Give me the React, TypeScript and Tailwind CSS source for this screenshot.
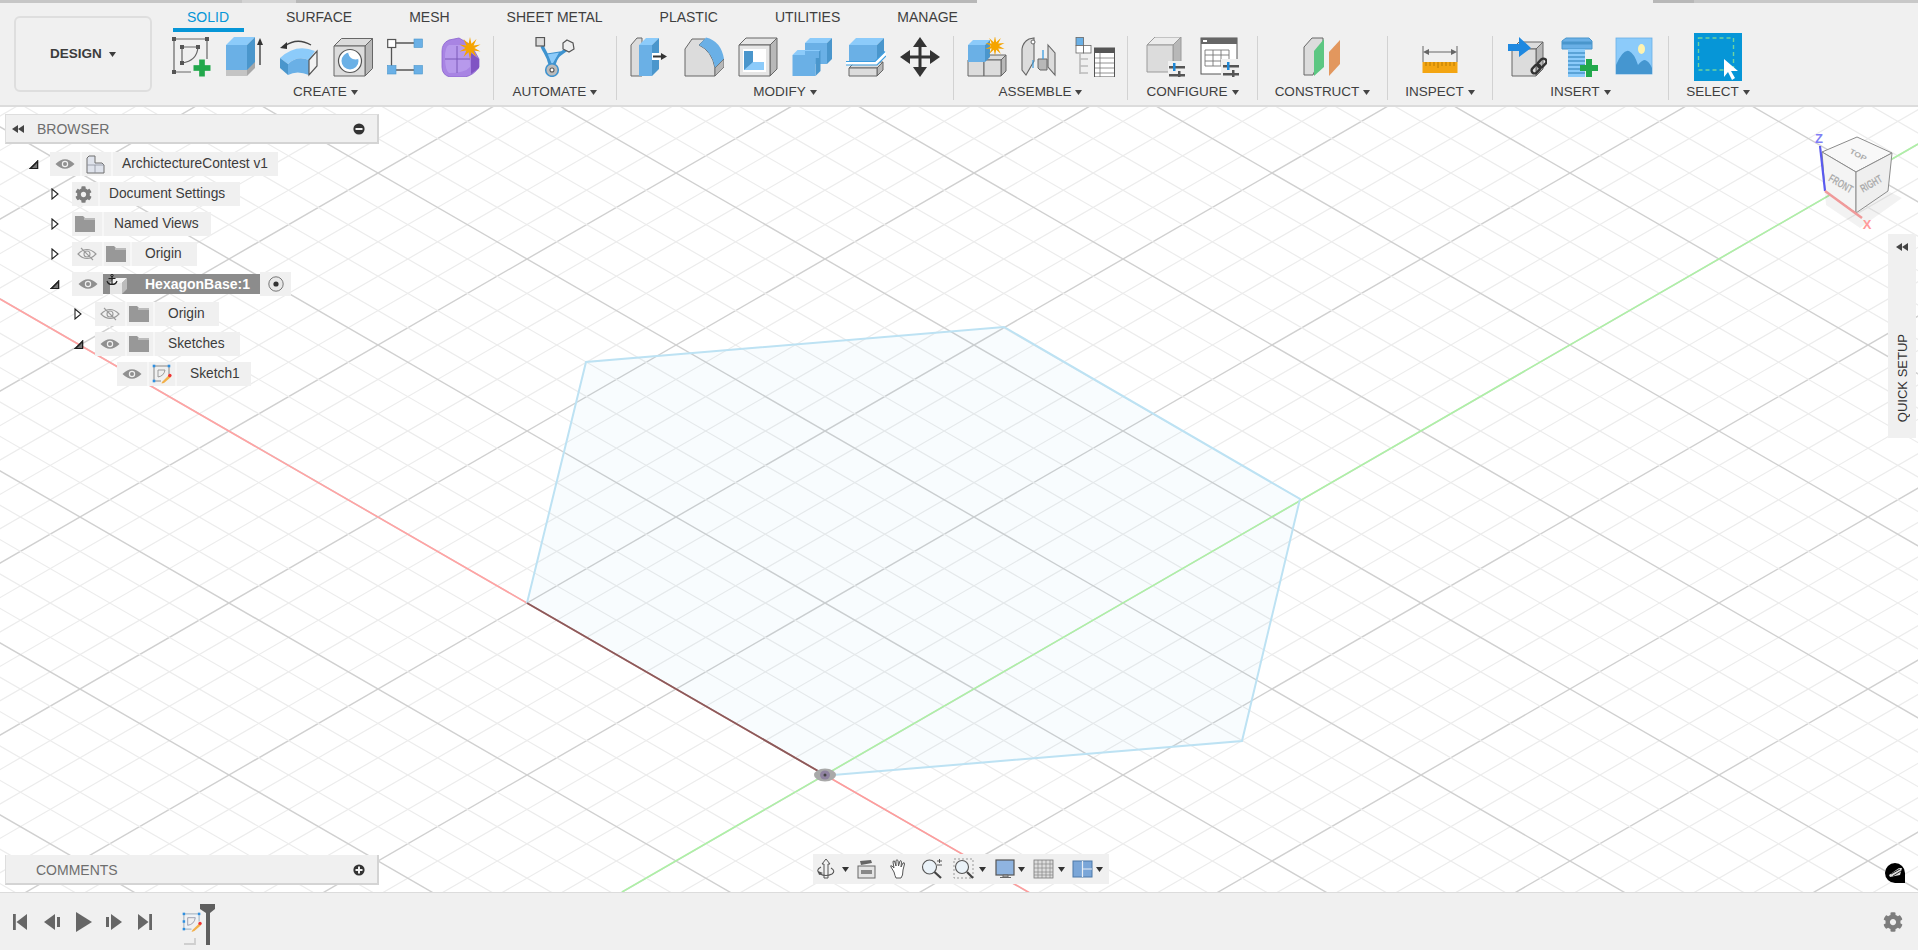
import type { ReactNode } from "react";
import { FaCog } from "react-icons/fa";

const BLUE = "#6ab0e6";
const BLUE_TOP = "#8ccbfa";
const BLUE_SIDE = "#4a96cc";
const GRAY = "#dcdcdc";
const GRAY_SIDE = "#b8b8b8";
const EDGE = "#666666";

function starPoints(cx: number, cy: number, R: number, r: number, n: number) {
  const pts: string[] = [];
  for (let i = 0; i < n * 2; i++) {
    const a = (Math.PI * i) / n;
    const d = i % 2 === 0 ? R : r;
    pts.push(`${(cx + d * Math.sin(a)).toFixed(1)},${(cy - d * Math.cos(a)).toFixed(1)}`);
  }
  return pts.join(" ");
}

function Box({
  x,
  y,
  w,
  h,
  d,
  top = BLUE_TOP,
  front = BLUE,
  side = BLUE_SIDE,
  stroke,
}: {
  x: number;
  y: number;
  w: number;
  h: number;
  d: number;
  top?: string;
  front?: string;
  side?: string;
  stroke?: string;
}) {
  return (
    <g stroke={stroke} strokeWidth={stroke ? 1 : 0} strokeLinejoin="round">
      <polygon fill={top} points={`${x},${y} ${x + d},${y - d} ${x + w + d},${y - d} ${x + w},${y}`} />
      <polygon fill={side} points={`${x + w},${y} ${x + w + d},${y - d} ${x + w + d},${y + h - d} ${x + w},${y + h}`} />
      <rect fill={front} x={x} y={y} width={w} height={h} />
    </g>
  );
}

function Plus({ x, y, s = 17 }: { x: number; y: number; s?: number }) {
  const t = s / 3;
  return (
    <g fill="#22a84c">
      <rect x={x - s / 2} y={y - t / 2} width={s} height={t} />
      <rect x={x - t / 2} y={y - s / 2} width={t} height={s} />
    </g>
  );
}

function Sliders({ x, y }: { x: number; y: number }) {
  return (
    <g>
      <rect x={x} y={y} width="16" height="2.5" fill="#555" />
      <rect x={x + 4} y={y - 3} width="2.5" height="8" fill="#1e88d8" />
      <rect x={x} y={y + 8} width="16" height="2.5" fill="#555" />
      <rect x={x + 9} y={y + 5} width="2.5" height="8" fill="#555" />
    </g>
  );
}

function Ico({ children, w = 40, h = 40 }: { children: ReactNode; w?: number; h?: number }) {
  return (
    <svg width={w} height={h} viewBox={`0 0 ${w} ${h}`} className="block shrink-0">
      {children}
    </svg>
  );
}

const SketchIcon = () => (
  <Ico>
    <g stroke={EDGE} strokeWidth="1.2" fill="none">
      <path d="M3 2 H36 V22 M3 2 V35 H20" />
      <path d="M11 10 H27 M11 10 V26 M27 10 Q26 24 11 26" />
    </g>
    {[[3, 2], [36, 2], [3, 35], [11, 10], [27, 10], [11, 26]].map(([x, y]) => (
      <rect key={`${x}-${y}`} x={x - 2} y={y - 2} width="4" height="4" fill="#555" />
    ))}
    <Plus x={31} y={31} />
  </Ico>
);

const ExtrudeIcon = () => (
  <Ico>
    <Box x={1} y={32} w={21} h={7} d={8} top={GRAY} front="#c4c4c4" side="#a8a8a8" />
    <Box x={1} y={8} w={21} h={25} d={8} />
    <path d="M35 28 V6" stroke="#333" strokeWidth="1.3" />
    <polygon points="35,1 38,8 32,8" fill="#333" />
  </Ico>
);

const RevolveIcon = () => (
  <Ico>
    <path d="M32 8 Q18 0 6 9" stroke="#444" strokeWidth="1.3" fill="none" />
    <polygon points="1,11 8,5 8,12" fill="#333" />
    <path d="M1 21 Q17 6 36 14 L30 23 Q18 18 9 27 Z" fill={BLUE_TOP} />
    <path d="M1 21 L9 27 V38 L1 31 Z" fill={BLUE_SIDE} />
    <path d="M9 27 Q18 18 30 23 V38 Q18 33 9 38 Z" fill={BLUE} />
    <polygon points="30,23 38,14 38,29 30,38" fill="#f2f2f2" stroke="#555" strokeWidth="1.2" />
  </Ico>
);

const HoleIcon = () => (
  <Ico>
    <Box x={1} y={9} w={31} h={30} d={7.5} top={GRAY} front={GRAY} side={GRAY_SIDE} stroke={EDGE} />
    <circle cx="17" cy="24" r="11.5" fill="#fff" stroke="#555" strokeWidth="1.2" />
    <circle cx="17" cy="24" r="8.5" fill={BLUE} />
    <path d="M15 15.5 Q17 24 25.5 22 Q26 16 19 15 Z" fill="#fff" />
  </Ico>
);

const BoxTool = () => (
  <Ico>
    <path d="M9 6 H27 M4.5 11 V29 M9 33 H27" stroke="#555" strokeWidth="1.3" />
    <rect x="0.7" y="2.5" width="8" height="8" fill="#fff" stroke="#555" strokeWidth="1.2" />
    <rect x="27" y="2" width="8.5" height="8.5" fill={BLUE} stroke={BLUE_SIDE} strokeWidth="0.6" />
    <rect x="0.5" y="28.5" width="8.5" height="8.5" fill={BLUE} stroke={BLUE_SIDE} strokeWidth="0.6" />
    <rect x="27" y="28.5" width="8.5" height="8.5" fill={BLUE} stroke={BLUE_SIDE} strokeWidth="0.6" />
  </Ico>
);

const FormIcon = () => (
  <Ico>
    <path d="M1 14 Q1 6 8 3 L18 1 L30 8 L38 22 L38 30 Q33 38 24 40 H9 Q1 38 1 30 Z" fill="#a884e3" stroke="#8a63cf" strokeWidth="0.8" />
    <path d="M30 16 L38 22 V31 L30 37 Z" fill="#8054c4" />
    <path d="M8 8 L24 8 Q29 10 29 30 Q24 36 8 36 Q4 33 4 20 Q4 10 8 8Z" fill="#b799ec" />
    <path d="M4 22 H29 M16 9 V36" stroke="#7b58b8" strokeWidth="1" fill="none" />
    <polygon points={starPoints(29, 11, 11, 4.5, 10)} fill="#f5a400" />
  </Ico>
);

const AutomateIcon = () => (
  <Ico>
    <path d="M7 9 C10 16 13 18 15 27 M32 12 C26 17 22 17 19 27" stroke="#3f93cf" strokeWidth="3.4" fill="none" />
    <polygon points="12,17 25,15 17,29" fill={BLUE_TOP} stroke="#3f93cf" strokeWidth="1.2" />
    <rect x="1" y="0.5" width="8.5" height="8.5" fill={GRAY} stroke="#555" strokeWidth="1.2" />
    <polygon points="32,3 38,6 39,12 34,15 28,12 28,6" fill="#eee" stroke="#555" strokeWidth="1.2" />
    <circle cx="17" cy="33" r="6.3" fill="#bbb" stroke="#3f93cf" strokeWidth="1.6" />
    <circle cx="17" cy="33" r="2" fill="#fff" stroke="#555" strokeWidth="1.1" />
  </Ico>
);

const PressPullIcon = () => (
  <Ico>
    <path d="M1 39 V8 L7 1 H12 V39 Z" fill={GRAY} stroke={EDGE} strokeWidth="1" />
    <Box x={9} y={8} w={13} h={31} d={7} />
    <rect x="22" y="16" width="8" height="7" fill="#fff" />
    <path d="M23 19.5 H32" stroke="#333" strokeWidth="2" />
    <polygon points="37,19.5 31,16 31,23" fill="#333" />
  </Ico>
);

const FilletIcon = () => (
  <Ico>
    <path d="M1 39 V12 L8 2 H21 L15 8 Q28 14 31 31 V39 Z" fill={GRAY} stroke={EDGE} strokeWidth="1" />
    <path d="M15 8 L22 0.5 Q37 4 40 22 L31 31 Q28 14 15 8 Z" fill={BLUE} />
    <path d="M31 39 L40 30 V22 L31 31 Z" fill={GRAY_SIDE} stroke={EDGE} strokeWidth="0.8" />
  </Ico>
);

const ShellIcon = () => (
  <Ico>
    <Box x={1} y={8} w={31} h={31} d={7} top="#e6e6e6" front="#e6e6e6" side={GRAY_SIDE} stroke={EDGE} />
    <rect x="5" y="12" width="23" height="23" fill="#fff" />
    <rect x="6" y="14" width="9" height="19" fill={BLUE_SIDE} />
    <polygon points="6,33 15,25 26,25 26,33" fill={BLUE_TOP} />
  </Ico>
);

const CombineIcon = () => (
  <Ico>
    <Box x={13} y={6} w={22} h={21} d={5} />
    <Box x={0.5} y={18} w={23} h={21} d={5} />
    <rect x="13" y="14" width="14" height="7" fill={BLUE} />
  </Ico>
);

const OffsetIcon = () => (
  <Ico>
    <Box x={3} y={8} w={28} h={18} d={7} />
    <Box x={3} y={31} w={28} h={8} d={6} top={GRAY} front={GRAY} side={GRAY_SIDE} stroke={EDGE} />
    <path d="M0 26 H30 L40 16" stroke="#fff" strokeWidth="3.5" fill="none" />
    <path d="M0 24.5 H29 L39 14.5 M0 28 H31 L40 19" stroke="#3b9de0" strokeWidth="1.1" fill="none" />
  </Ico>
);

const MoveIcon = () => (
  <Ico>
    <path d="M20 6 V34 M6 20 H34" stroke="#333" strokeWidth="3" />
    <polygon points="20,0 27,10 13,10" fill="#333" />
    <polygon points="20,40 27,30 13,30" fill="#333" />
    <polygon points="0,20 10,13 10,27" fill="#333" />
    <polygon points="40,20 30,13 30,27" fill="#333" />
  </Ico>
);

const NewComponentIcon = () => (
  <Ico>
    <Box x={1} y={23} w={16} h={16} d={0} front={GRAY} stroke={EDGE} />
    <Box x={17} y={23} w={17} h={16} d={5} top={GRAY} front={GRAY} side={GRAY_SIDE} stroke={EDGE} />
    <Box x={1} y={8} w={17} h={17} d={5} />
    <polygon points={starPoints(28, 9, 10, 4, 10)} fill="#f5a400" />
  </Ico>
);

const JointIcon = () => (
  <Ico>
    <path d="M1 33 V12 Q2 5 8 2 L13 1 V24 L5 38 Z" fill={GRAY} stroke={EDGE} strokeWidth="1.1" />
    <circle cx="12" cy="5" r="2" fill="#fff" stroke={EDGE} />
    <path d="M12 23 V31" stroke="#3b9de0" strokeWidth="1.2" />
    <path d="M17 22 H26 V33 H19 L17 31 Z" fill={GRAY_SIDE} stroke={EDGE} />
    <path d="M27 8 L34 16 V38 L27 30 Z" fill={GRAY} stroke={EDGE} strokeWidth="1.1" />
    <path d="M22 13 V22" stroke="#3b9de0" strokeWidth="1.3" />
  </Ico>
);

const BomIcon = () => (
  <Ico>
    <rect x="1" y="0.5" width="7.5" height="8" fill={BLUE} stroke={EDGE} strokeWidth="0.8" />
    <rect x="1" y="8.5" width="7.5" height="7.5" fill="#fff" stroke={EDGE} strokeWidth="0.8" />
    <rect x="8.5" y="8.5" width="7.5" height="7.5" fill="#fff" stroke={EDGE} strokeWidth="0.8" />
    <path d="M5 16 V37 M5 22 H13 M5 29 H13 M5 36 H13" stroke="#bbb" strokeWidth="1.6" />
    <rect x="19.5" y="11" width="20" height="29" fill="#fff" stroke="#555" strokeWidth="1" />
    <rect x="19.5" y="11" width="20" height="5" fill="#555" />
    <path d="M20 21 H39 M20 26 H39 M20 31 H39 M20 36 H39 M25 16 V40" stroke="#777" strokeWidth="0.8" />
  </Ico>
);

const ConfigBoxIcon = () => (
  <Ico>
    <Box x={1} y={8} w={26} h={27} d={8} top="#ececec" front={GRAY} side={GRAY_SIDE} stroke="#9a9a9a" />
    <rect x="22" y="24" width="18" height="16" fill="#f0f0f0" />
    <Sliders x={23} y={29} />
  </Ico>
);

const ConfigTableIcon = () => (
  <Ico>
    <rect x="1" y="1" width="36" height="36" fill="#fff" stroke="#555" strokeWidth="1" />
    <rect x="1" y="1" width="36" height="6" fill="#666" />
    <rect x="3" y="3" width="4" height="2" fill="#fff" />
    <path d="M5 13 H29 V29 H5 Z M5 18 H29 M5 24 H29 M13 13 V29 M21 13 V29" stroke="#777" strokeWidth="0.9" fill="none" />
    <rect x="21" y="22" width="19" height="18" fill="#f0f0f0" />
    <Sliders x={23} y={28} />
  </Ico>
);

const ConstructIcon = () => (
  <Ico>
    <path d="M1 38 V10 L9 1 H20 V14 L10 38 Z" fill={GRAY} stroke={EDGE} strokeWidth="1" />
    <polygon points="11,14 21,2 21,30 11,39" fill="#5cc782" />
    <polygon points="26,15 37,3 37,27 26,39" fill="#e2975e" />
  </Ico>
);

const InspectIcon = () => (
  <Ico>
    <path d="M3 9 V25 M37 9 V25" stroke="#666" strokeWidth="1" />
    <path d="M6 15 H34" stroke="#666" strokeWidth="1" />
    <polygon points="3,15 9,12 9,18" fill="#666" />
    <polygon points="37,15 31,12 31,18" fill="#666" />
    <rect x="2.5" y="25" width="35" height="11" fill="#f3a512" />
    <path d="M6 25 V29 M10 25 V29 M14 25 V29 M18 25 V31 M22 25 V29 M26 25 V29 M30 25 V29 M34 25 V29" stroke="#a66f00" strokeWidth="0.8" />
  </Ico>
);

const DeriveIcon = () => (
  <Ico>
    <Box x={5} y={12} w={24} h={27} d={7} top={GRAY} front={GRAY} side={GRAY_SIDE} stroke={EDGE} />
    <polygon points="1,7 12,7 12,0 24,11 12,20 12,14 1,14" fill="#1e88e0" />
    <g fill="none" stroke="#333" strokeWidth="2.4">
      <rect x="24" y="29" width="10" height="6" rx="3" transform="rotate(-45 29 32)" />
      <rect x="30" y="23" width="10" height="6" rx="3" transform="rotate(-45 35 26)" />
    </g>
  </Ico>
);

const BoltIcon = () => (
  <Ico>
    <polygon points="1,4 5,1 28,1 31,4 31,12 1,12" fill={BLUE} stroke="#4a96cc" />
    <path d="M1 6 H31" stroke={BLUE_SIDE} strokeWidth="3" />
    <rect x="7" y="12" width="17" height="28" fill={BLUE_TOP} />
    <path d="M7 16 H24 M7 20 H24 M7 24 H24 M7 28 H24 M7 32 H24 M7 36 H24" stroke={BLUE_SIDE} strokeWidth="1.4" />
    <Plus x={28} y={31} s={18} />
  </Ico>
);

const PictureIcon = () => (
  <Ico>
    <rect x="1" y="1" width="36" height="36" fill={BLUE_TOP} stroke={BLUE} strokeWidth="0.8" />
    <path d="M1 28 Q8 12 14 14 Q19 16 23 28 Q27 23 30 23 Q34 24 37 31 V37 H1 Z" fill="#4596d0" />
    <ellipse cx="26.5" cy="12" rx="3.5" ry="5" fill="#fff3b0" />
  </Ico>
);

const SelectIcon = () => (
  <Ico w={48} h={48}>
    <rect width="48" height="48" fill="#0696d7" />
    <rect x="4.5" y="5" width="35" height="32" fill="none" stroke="#6fd3a0" strokeWidth="1.4" strokeDasharray="4 3" />
    <polygon points="30,26 30,44 34,39 38,47 41,45 37,38 44,38" fill="#fff" />
  </Ico>
);

function Caret({ className = "fill-[#444]" }: { className?: string }) {
  return (
    <svg width="7" height="5" viewBox="0 0 7 5" className={`block shrink-0 ${className}`}>
      <polygon points="0,0 7,0 3.5,5" />
    </svg>
  );
}

const groups: { label: string; width: string; icons: ReactNode[] }[] = [
  { label: "CREATE", width: "w-[336px]", icons: [<SketchIcon />, <ExtrudeIcon />, <RevolveIcon />, <HoleIcon />, <BoxTool />, <FormIcon />] },
  { label: "AUTOMATE", width: "w-[123px]", icons: [<AutomateIcon />] },
  { label: "MODIFY", width: "w-[337px]", icons: [<PressPullIcon />, <FilletIcon />, <ShellIcon />, <CombineIcon />, <OffsetIcon />, <MoveIcon />] },
  { label: "ASSEMBLE", width: "w-[174px]", icons: [<NewComponentIcon />, <JointIcon />, <BomIcon />] },
  { label: "CONFIGURE", width: "w-[130px]", icons: [<ConfigBoxIcon />, <ConfigTableIcon />] },
  { label: "CONSTRUCT", width: "w-[130px]", icons: [<ConstructIcon />] },
  { label: "INSPECT", width: "w-[105px]", icons: [<InspectIcon />] },
  { label: "INSERT", width: "w-[176px]", icons: [<DeriveIcon />, <BoltIcon />, <PictureIcon />] },
];

const tabs = ["SOLID", "SURFACE", "MESH", "SHEET METAL", "PLASTIC", "UTILITIES", "MANAGE"];

function Toolbar() {
  return (
    <header className="h-[107px] shrink-0 bg-[#f0f0f0] border-b-2 border-[#dcdcdc] flex flex-col">
      <div className="h-[3px] flex shrink-0">
        <div className="w-[242px] bg-[#c6c6c6]" />
        <div className="w-[54px] bg-[#d4d4d4]" />
        <div className="w-[681px] bg-[#b8b8b8]" />
        <div className="w-[676px]" />
        <div className="w-[41px] bg-[#b8b8b8]" />
        <div className="flex-1 bg-[#c8c8c8]" />
      </div>
      <div className="flex flex-1 min-h-0">
        <div className="w-[158px] shrink-0 pl-[14px] pt-[13px]">
          <div className="w-[138px] h-[76px] border-2 border-[#dedede] rounded-[6px] flex items-center justify-center gap-[7px] text-[13.5px] font-bold text-[#3c3c3c]">
            DESIGN
            <Caret className="fill-[#3c3c3c]" />
          </div>
        </div>
        <div className="flex-1 flex flex-col">
          <nav className="h-[30px] shrink-0 pl-[29px] pt-[6px] flex gap-[57px] text-[14px] leading-4 text-[#3f3f3f]">
            {tabs.map((t, i) => (
              <div key={t} className={`relative ${i === 0 ? "text-[#0696d7]" : ""}`}>
                {t}
                {i === 0 && <div className="absolute left-[-14px] right-[-15px] top-[19px] h-[4px] bg-[#0696d7]" />}
              </div>
            ))}
          </nav>
          <div className="flex mt-[3px]">
            {groups.map((g) => (
              <div key={g.label} className={`${g.width} h-[64px] box-border border-r border-[#d2d2d2] flex flex-col items-center`}>
                <div className="h-[48px] pt-px flex">
                  {g.icons.map((icon, i) => (
                    <div key={i} className="w-[54px] flex justify-center">
                      {icon}
                    </div>
                  ))}
                </div>
                <div className="flex items-center gap-[4px] text-[13.5px] leading-4 text-[#3f3f3f]">
                  {g.label}
                  <Caret />
                </div>
              </div>
            ))}
            <div className="w-[98px] h-[64px] flex flex-col items-center">
              <div className="h-[48px] mt-[-3px] mb-[3px]">
                <SelectIcon />
              </div>
              <div className="flex items-center gap-[4px] text-[13.5px] leading-4 text-[#3f3f3f]">
                SELECT
                <Caret />
              </div>
            </div>
          </div>
        </div>
      </div>
    </header>
  );
}

// model grid drawn around the world origin
const O = { x: 825, y: 775 };
const U = { x: 149 / 5, y: 86 / 5 };

function gridLines(sign: number) {
  const lines = [];
  for (let k = -90; k <= 90; k++) {
    const px = O.x + k * U.x;
    const py = O.y - sign * k * U.y;
    lines.push(
      <line
        key={k}
        x1={px - 2980}
        y1={py - sign * 1720}
        x2={px + 2980}
        y2={py + sign * 1720}
        stroke={k % 5 === 0 ? "#d0d0d0" : "#ececec"}
        strokeWidth={k % 5 === 0 ? 1.4 : 1.2}
      />
    );
  }
  return lines;
}

function ViewCube() {
  return (
    <g>
      <polygon points="1825,191 1856,213 1888,191 1902,198 1860,228 1826,205" fill="#000" opacity="0.05" />
      <polygon points="1822,152 1857,137 1892,153 1856,172" fill="#f8f8f8" stroke="#8c8c8c" strokeWidth="1" />
      <polygon points="1822,152 1856,172 1856,213 1825,191" fill="#f4f4f4" stroke="#8c8c8c" strokeWidth="1" />
      <polygon points="1856,172 1892,153 1888,191 1856,213" fill="#efefef" stroke="#8c8c8c" strokeWidth="1" />
      <g fontFamily="'Liberation Sans', sans-serif" fontWeight="700" fill="#adadad" textAnchor="middle">
        <text fontSize="9" transform="translate(1857 157) rotate(28) scale(1 0.8)">TOP</text>
        <text fontSize="7.5" transform="translate(1839 187) rotate(30) scale(1 1.5)">FRONT</text>
        <text fontSize="7.5" transform="translate(1873 187) rotate(-30) scale(1 1.5)">RIGHT</text>
      </g>
      <line x1="1825" y1="191" x2="1820" y2="146" stroke="#5a5af0" strokeWidth="2.2" />
      <line x1="1825" y1="191" x2="1862" y2="218" stroke="#f09a9a" strokeWidth="2.5" />
      <text x="1819" y="143" textAnchor="middle" fill="#7f7ff5" fontSize="13" fontWeight="700" fontFamily="'Liberation Sans', sans-serif">Z</text>
      <text x="1867" y="229" textAnchor="middle" fill="#ff9a9a" fontSize="13" fontWeight="700" fontFamily="'Liberation Sans', sans-serif">X</text>
    </g>
  );
}

function Canvas() {
  return (
    <svg viewBox="0 107 1918 785" className="absolute inset-0 w-full h-full">
      <g>{gridLines(-1)}</g>
      <g>{gridLines(1)}</g>
      <polygon points="527,603 586,362 1004,327 1300,499 1242,741 825,775" fill="#58b4e6" fillOpacity="0.04" />
      <line x1="825" y1="775" x2="0" y2="299" stroke="#ffa3a3" strokeWidth="1.6" />
      <line x1="825" y1="775" x2="1030" y2="893" stroke="#ff9c9c" strokeWidth="1.6" />
      <line x1="622" y1="892" x2="1918" y2="144" stroke="#aef0a6" strokeWidth="1.6" />
      <polyline points="527,603 586,362 1004,327 1300,499 1242,741 833,775" fill="none" stroke="#bde2f3" strokeWidth="2" />
      <line x1="527" y1="603" x2="825" y2="775" stroke="#8a5a5a" strokeWidth="1.8" />
      <ellipse cx="825" cy="775" rx="11" ry="6.5" fill="#a9a9a9" />
      <ellipse cx="825" cy="775" rx="5" ry="4.5" fill="#8f82a0" />
      <circle cx="825" cy="775" r="1.5" fill="#444" />
      <ViewCube />
    </svg>
  );
}

function Eye({ off }: { off?: boolean }) {
  return (
    <svg width="20" height="14" viewBox="0 0 20 14" className="block shrink-0">
      {off ? (
        <g>
          <path d="M1 7 Q10 -2 19 7 Q10 16 1 7 Z" fill="none" stroke="#9a9a9a" strokeWidth="1.1" />
          <circle cx="10" cy="7" r="3" fill="none" stroke="#9a9a9a" strokeWidth="1.1" />
          <path d="M4 1 L16 13" stroke="#9a9a9a" strokeWidth="1.1" />
        </g>
      ) : (
        <g>
          <path d="M0.5 7 Q10 -2.5 19.5 7 Q10 16.5 0.5 7 Z" fill="#909090" />
          <circle cx="10" cy="7" r="3.2" fill="#f0f0f0" />
          <circle cx="10" cy="7" r="2" fill="#909090" />
        </g>
      )}
    </svg>
  );
}

function Folder() {
  return (
    <svg width="20" height="16" viewBox="0 0 20 16" className="block shrink-0">
      <path d="M0 0 H8 L10 2 H20 V16 H0 Z" fill="#989898" />
      <path d="M9 3 H20" stroke="#f0f0f0" strokeWidth="0.8" />
    </svg>
  );
}

function Twist({ open }: { open: boolean }) {
  return open ? (
    <svg width="10" height="9" viewBox="0 0 10 9" className="block">
      <polygon points="0,9 9,0 9,9" fill="#222" stroke="#222" strokeWidth="0.6" />
      <polygon points="3,8 8,3 8,8" fill="#777" />
    </svg>
  ) : (
    <svg width="8" height="12" viewBox="0 0 8 12" className="block">
      <polygon points="1,1 7,6 1,11" fill="#fff" stroke="#222" strokeWidth="1.1" />
    </svg>
  );
}

function Seg({ children, className = "" }: { children: ReactNode; className?: string }) {
  return <div className={`h-full bg-[#f0f0f0] flex items-center ${className}`}>{children}</div>;
}

function ComponentGlyph() {
  return (
    <svg width="19" height="19" viewBox="0 0 19 19" className="block">
      <path d="M1 18 V3 L3 1 H9 V8 H16 L18 10 V18 Z" fill="#dfe3ec" stroke="#6f6f6f" strokeWidth="1" />
      <path d="M1 10 H18 M9 10 V18" stroke="#8d93a0" strokeWidth="0.8" fill="none" />
    </svg>
  );
}

function SmallSketch() {
  return (
    <svg width="20" height="20" viewBox="0 0 20 20" className="block">
      <path d="M2 2 H17 V10 M2 2 V17 H9" fill="none" stroke="#888" strokeWidth="1" />
      <path d="M6 6 H13 M6 6 V13 M13 6 Q12 12 6 13" fill="none" stroke="#888" strokeWidth="0.8" />
      {[[2, 2], [17, 2], [2, 17]].map(([x, y]) => (
        <rect key={`${x}${y}`} x={x - 1.3} y={y - 1.3} width="2.6" height="2.6" fill="#2e8fe0" />
      ))}
      <path d="M10 18 L17 11 L19 13 L12 19 L9.5 19.5 Z" fill="#f2b04a" />
      <circle cx="17.8" cy="11.5" r="1.8" fill="#e33" />
    </svg>
  );
}

type Node = {
  id: string;
  indent: string;
  twist?: "open" | "closed";
  eye?: "on" | "off";
  glyph: ReactNode;
  glyphClass: string;
  label: string;
  labelClass: string;
};

const nodes: Node[] = [
  { id: "root", indent: "ml-[23px]", twist: "open", eye: "on", glyph: <ComponentGlyph />, glyphClass: "w-[29px] pl-[4px]", label: "ArchictectureContest v1", labelClass: "pl-[9px] pr-[10px]" },
  { id: "settings", indent: "ml-[45px]", twist: "closed", glyph: <FaCog className="text-[#7d7d7d] text-[17px]" />, glyphClass: "w-[26px] pl-[3px]", label: "Document Settings", labelClass: "pl-[9px] pr-[15px]" },
  { id: "views", indent: "ml-[45px]", twist: "closed", glyph: <Folder />, glyphClass: "w-[30px] pl-[3px]", label: "Named Views", labelClass: "pl-[10px] pr-[12px]" },
  { id: "origin", indent: "ml-[45px]", twist: "closed", eye: "off", glyph: <Folder />, glyphClass: "w-[26px] pl-[2px]", label: "Origin", labelClass: "pl-[13px] pr-[15px]" },
  { id: "origin2", indent: "ml-[68px]", twist: "closed", eye: "off", glyph: <Folder />, glyphClass: "w-[26px] pl-[2px]", label: "Origin", labelClass: "pl-[13px] pr-[14px]" },
  { id: "sketches", indent: "ml-[68px]", twist: "open", eye: "on", glyph: <Folder />, glyphClass: "w-[26px] pl-[2px]", label: "Sketches", labelClass: "pl-[13px] pr-[15px]" },
  { id: "sketch1", indent: "ml-[90px]", eye: "on", glyph: <SmallSketch />, glyphClass: "w-[26px] pl-[3px]", label: "Sketch1", labelClass: "pl-[13px] pr-[11px]" },
];

function TreeRow({ node }: { node: Node }) {
  return (
    <div className={`flex items-center h-[24px] mt-[6px] ${node.indent}`}>
      <div className="pl-px w-[22px] shrink-0">{node.twist && <Twist open={node.twist === "open"} />}</div>
      <div className="flex h-full gap-[2px] bg-[#f7f7f7]">
        {node.eye && (
          <Seg className="w-[30px] justify-center">
            <Eye off={node.eye === "off"} />
          </Seg>
        )}
        <Seg className={node.glyphClass}>{node.glyph}</Seg>
        <Seg className={`pt-px text-[13.75px] text-[#3c3c3c] whitespace-nowrap ${node.labelClass}`}>{node.label}</Seg>
      </div>
    </div>
  );
}

function HexagonRow() {
  return (
    <div className="flex items-center h-[24px] mt-[6px] ml-[45px]">
      <div className="w-[22px] shrink-0">
        <Twist open />
      </div>
      <div className="flex h-full">
        <Seg className="w-[31px] justify-center">
          <Eye />
        </Seg>
        <div className="relative w-[157px] h-[20px] self-center bg-[#8c8c8c] text-white font-bold text-[14px] leading-[20px] pl-[42px]">
          <svg width="22" height="20" viewBox="0 0 22 20" className="absolute left-[3px] top-0">
            <polygon points="4,9 8,4 21,4 16,9" fill="#f4f4f4" />
            <polygon points="16,9 21,4 21,15 16,20" fill="#bcbcbc" />
            <rect x="4" y="9" width="12" height="11" fill="#e6e6e6" />
            <path d="M6 2 V10 M2.5 4.5 H9.5 M1 7 Q2 10.5 6 10.5 Q10 10.5 11 7" stroke="#222" strokeWidth="1.2" fill="none" />
            <circle cx="6" cy="1.5" r="1.2" fill="none" stroke="#222" />
          </svg>
          HexagonBase:1
        </div>
        <Seg className="w-[31px] justify-center">
          <svg width="16" height="16" viewBox="0 0 16 16">
            <circle cx="8" cy="8" r="7.2" fill="#e8e8e8" stroke="#777" strokeWidth="1" />
            <circle cx="8" cy="8" r="2.6" fill="#333" />
          </svg>
        </Seg>
      </div>
    </div>
  );
}

function CircleGlyph({ plus }: { plus?: boolean }) {
  return (
    <svg width="12" height="12" viewBox="0 0 12 12" className="block">
      <circle cx="6" cy="6" r="5.6" fill="#333" />
      <rect x="2.5" y="5" width="7" height="2" fill="#f0f0f0" />
      {plus && <rect x="5" y="2.5" width="2" height="7" fill="#f0f0f0" />}
    </svg>
  );
}

function BrowserPanel() {
  return (
    <aside className="absolute left-[5px] top-[7px] bottom-[7px] w-[374px] flex flex-col justify-between">
      <div>
        <div className="h-[30px] bg-[#f0f0f0] border border-[#dedede] border-r-2 border-b-2 border-r-[#d4d4d4] border-b-[#d4d4d4] flex items-center pt-px">
          <svg width="12" height="8" viewBox="0 0 12 8" className="ml-[6px] block">
            <polygon points="6,0 6,8 0,4" fill="#444" />
            <polygon points="12,0 12,8 6,4" fill="#444" />
          </svg>
          <span className="ml-[13px] text-[14px] text-[#6e6e6e]">BROWSER</span>
          <div className="ml-auto mr-[12px]">
            <CircleGlyph />
          </div>
        </div>
        <div className="pt-[2px]">
          {nodes.slice(0, 4).map((n) => (
            <TreeRow key={n.id} node={n} />
          ))}
          <HexagonRow />
          {nodes.slice(4).map((n) => (
            <TreeRow key={n.id} node={n} />
          ))}
        </div>
      </div>
      <div className="h-[30px] bg-[#f0f0f0] border-l border-[#dedede] border-r-2 border-b-2 border-r-[#d4d4d4] border-b-[#d4d4d4] flex items-center pl-[30px] pt-[2px]">
        <span className="text-[14px] text-[#6e6e6e]">COMMENTS</span>
        <div className="ml-auto mr-[12px]">
          <CircleGlyph plus />
        </div>
      </div>
    </aside>
  );
}

function QuickSetup() {
  return (
    <aside className="absolute right-[2px] top-[127px] w-[28px] h-[204px] bg-[#f0f0f0] flex flex-col items-center justify-between pt-[9px] pb-[16px]">
      <svg width="12" height="8" viewBox="0 0 12 8" className="block">
        <polygon points="6,0 6,8 0,4" fill="#444" />
        <polygon points="12,0 12,8 6,4" fill="#444" />
      </svg>
      <span className="[writing-mode:vertical-rl] rotate-180 text-[13px] leading-none text-[#333]">QUICK SETUP</span>
    </aside>
  );
}

function NavIcon({ children }: { children: ReactNode }) {
  return (
    <svg width="22" height="22" viewBox="0 0 22 22" className="block shrink-0">
      {children}
    </svg>
  );
}

function NavBar() {
  return (
    <div className="absolute left-[813px] bottom-[8px] w-[296px] h-[30px] bg-[#f0f0f0] flex items-center pl-[2px]">
      <NavIcon>
        <path d="M11 1 L15 6 H13 V20 H9 V6 H7 Z" fill="#f2f2f2" stroke="#555" strokeWidth="1" />
        <path d="M6 9 Q0 12 5 16 Q11 19 17 16 Q21 13 16 10" fill="none" stroke="#555" strokeWidth="1.1" />
        <polygon points="3,13 8,15 4,17" fill="#555" />
      </NavIcon>
      <div className="ml-[5px]">
        <Caret className="fill-[#333]" />
      </div>
      <div className="ml-[6px]">
        <NavIcon>
          <path d="M5 3 L16 2 L17 5 L6 7 Z" fill="#666" />
          <rect x="3" y="8" width="17" height="12" fill="#e4e4e4" stroke="#666" strokeWidth="1" />
          <rect x="6" y="12" width="11" height="4" fill="#888" />
        </NavIcon>
      </div>
      <div className="ml-[11px]">
        <NavIcon>
          <path d="M6 14 L3 9 Q2 7 4 8 L6 10 L5 4 Q5 2.5 6.5 3 L8 8 L8 2.5 Q9 1 10 2.5 L10.5 8 L12 3 Q13 2 13.5 3.5 L13 9 L15 5 Q16.5 4 16.5 6 L15 12 Q15 18 13 20 H8 Q7 18 6 14 Z" fill="#fff" stroke="#555" strokeWidth="1" />
        </NavIcon>
      </div>
      <div className="ml-[11px]">
        <NavIcon>
          <circle cx="8.5" cy="9" r="7" fill="#eaf2f8" stroke="#555" strokeWidth="1.1" />
          <path d="M13.5 14 L20 20" stroke="#444" strokeWidth="2.2" />
          <path d="M16 3 H21 M18.5 1 V5 M16 7 H21" stroke="#444" strokeWidth="0.9" />
        </NavIcon>
      </div>
      <div className="ml-[10px]">
        <NavIcon>
          <rect x="1" y="1" width="19" height="19" fill="none" stroke="#999" strokeDasharray="2 2" />
          <circle cx="9" cy="9" r="6.5" fill="#eaf2f8" stroke="#555" strokeWidth="1.1" />
          <path d="M14 14 L20 20" stroke="#444" strokeWidth="2.2" />
        </NavIcon>
      </div>
      <div className="ml-[4px]">
        <Caret className="fill-[#333]" />
      </div>
      <div className="ml-[8px]">
        <NavIcon>
          <rect x="2" y="2" width="18" height="15" fill="#8fb4e0" stroke="#555" strokeWidth="1.2" />
          <path d="M9 17 H14 V19 H9 Z M6 19.5 H17" stroke="#666" strokeWidth="1" fill="#bbb" />
        </NavIcon>
      </div>
      <div className="ml-[2px]">
        <Caret className="fill-[#333]" />
      </div>
      <div className="ml-[8px]">
        <NavIcon>
          <rect x="1" y="2" width="19" height="18" fill="#ddd" stroke="#777" strokeWidth="0.8" />
          <path d="M1 6 H20 M1 10 H20 M1 14 H20 M1 17 H20 M5 2 V20 M9 2 V20 M13 2 V20 M17 2 V20" stroke="#888" strokeWidth="0.7" />
        </NavIcon>
      </div>
      <div className="ml-[3px]">
        <Caret className="fill-[#333]" />
      </div>
      <div className="ml-[7px]">
        <NavIcon>
          <rect x="1" y="3" width="19" height="16" fill="#7aa6d8" stroke="#4d78a8" strokeWidth="1" />
          <path d="M10.5 3 V19 M11 11 H20" stroke="#e8eef5" strokeWidth="1.2" />
        </NavIcon>
      </div>
      <div className="ml-[2px]">
        <Caret className="fill-[#333]" />
      </div>
    </div>
  );
}

function Transport({ w, children }: { w: number; children: ReactNode }) {
  return (
    <svg width={w} height="16" viewBox={`0 0 ${w} 16`} className="block shrink-0 fill-[#666]">
      {children}
    </svg>
  );
}

function TimelineMarker() {
  return (
    <svg width="40" height="46" viewBox="0 0 40 46" className="block">
      <g transform="translate(2 13) scale(0.95)">
        <path d="M2 2 H18 V10 M2 2 V18 H10" fill="#eef2f6" stroke="#9ab" strokeWidth="1" />
        <path d="M6 6 H14 M6 6 V14 M14 6 Q13 13 6 14" fill="none" stroke="#889" strokeWidth="0.8" />
        {[[2, 2], [18, 2], [2, 18], [2, 10]].map(([x, y]) => (
          <rect key={`${x}${y}`} x={x - 1.3} y={y - 1.3} width="2.6" height="2.6" fill="#2e8fe0" />
        ))}
        <path d="M11 19 L18 12 L20 14 L13 20 L10 21 Z" fill="#f2b04a" />
        <circle cx="19" cy="12" r="1.8" fill="#e33" />
      </g>
      <path d="M4 45 H15 V39" stroke="#cfcfcf" strokeWidth="1.8" fill="none" />
      <path d="M20 5 H35 V10 L30 14 V46 H26 V14 L20 10 Z" fill="#5f5f5f" />
    </svg>
  );
}

function Timeline() {
  return (
    <footer className="h-[58px] shrink-0 bg-[#f0f0f0] border-t border-[#dcdcdc] flex items-center pl-[13px] pr-[15px]">
      <Transport w={14}>
        <rect x="0" y="0" width="2.8" height="16" />
        <polygon points="14,0 14,16 3.5,8" />
      </Transport>
      <div className="ml-[17px]">
        <Transport w={16}>
          <polygon points="0,8 11,0 11,16" />
          <rect x="13" y="3" width="3" height="10" />
        </Transport>
      </div>
      <div className="ml-[16px]">
        <svg width="16" height="20" viewBox="0 0 16 20" className="block fill-[#666]">
          <polygon points="0,0 16,10 0,20" />
        </svg>
      </div>
      <div className="ml-[14px]">
        <Transport w={16}>
          <rect x="0" y="3" width="3" height="10" />
          <polygon points="5,0 5,16 16,8" />
        </Transport>
      </div>
      <div className="ml-[16px]">
        <Transport w={14}>
          <polygon points="0,0 0,16 10.5,8" />
          <rect x="11.2" y="0" width="2.8" height="16" />
        </Transport>
      </div>
      <div className="ml-[28px]">
        <TimelineMarker />
      </div>
      <FaCog className="ml-auto text-[#7d7d7d] text-[20px]" />
    </footer>
  );
}

function ForgeBadge() {
  return (
    <svg width="20" height="20" viewBox="0 0 20 20" className="absolute right-[13px] bottom-[9px]">
      <path d="M10 0 A10 10 0 0 1 20 10 V20 H10 A10 10 0 0 1 10 0 Z" fill="#000" />
      <path d="M4 12 L14 5 L17 5 L15 12 L5 14 Z" fill="#ddd" />
      <path d="M6 11 L15 6 M8 13 L16 8" stroke="#000" strokeWidth="0.8" />
    </svg>
  );
}

export default function App() {
  return (
    <div className="w-full h-screen overflow-hidden flex flex-col bg-white font-['Liberation_Sans',Arial,sans-serif]">
      <Toolbar />
      <main className="relative flex-1 min-h-0 overflow-hidden bg-white">
        <Canvas />
        <BrowserPanel />
        <QuickSetup />
        <NavBar />
        <ForgeBadge />
      </main>
      <Timeline />
    </div>
  );
}
